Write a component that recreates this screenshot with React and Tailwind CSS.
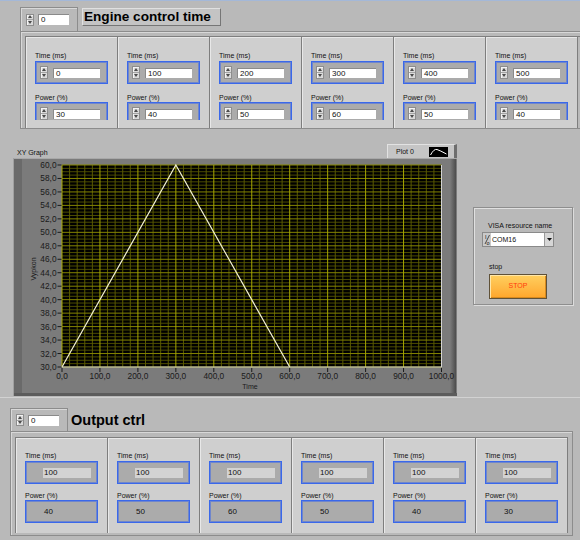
import React from 'react';

const engine = [
  { time: 0, power: 30 },
  { time: 100, power: 40 },
  { time: 200, power: 50 },
  { time: 300, power: 60 },
  { time: 400, power: 50 },
  { time: 500, power: 40 },
];

const output = [
  { time: 100, power: 40 },
  { time: 100, power: 50 },
  { time: 100, power: 60 },
  { time: 100, power: 50 },
  { time: 100, power: 40 },
  { time: 100, power: 30 },
];

const Spinner = ({ small }) => (
  <div className={`flex flex-col w-[8px] ${small ? 'h-[12px]' : 'h-[13px]'} border border-[#8d8d8d] bg-[#dadada] shadow-[inset_1px_1px_0_#f4f4f4]`}>
    <div className="flex-1 flex items-center justify-center border-b border-[#a4a4a4]">
      <svg width="4" height="3" viewBox="0 0 4 3"><path d="M2 0L4 3H0Z" fill="#4a4a4a" /></svg>
    </div>
    <div className="flex-1 flex items-center justify-center">
      <svg width="4" height="3" viewBox="0 0 4 3"><path d="M0 0H4L2 3Z" fill="#4a4a4a" /></svg>
    </div>
  </div>
);

const Label = ({ children, className = '' }) => (
  <div className={`h-[9px] text-[7px] leading-[9px] text-[#111] whitespace-nowrap ${className}`}>{children}</div>
);

const blueBox = "w-[73px] h-[23px] border border-[#3a68ea] bg-[#ababab] shadow-[inset_0_0_0_1px_#6f86cc]";

const EngineElement = ({ time, power }) => (
  <div className="w-[92px] h-[91px] border-r border-[#7e7e7e] bg-[#cfcfcf] shadow-[inset_1px_1px_0_#e8e8e8]">
    <div className="h-[83px] overflow-hidden pl-[9px] pt-[14px]">
      <Label>Time (ms)</Label>
      <div className={`mt-[1px] flex items-center pl-[4px] gap-[5px] ${blueBox}`}>
        <Spinner />
        <div className="w-[47px] h-[10px] bg-white border-t border-l border-[#8a8a8a] text-[8px] leading-[9px] pl-[2px] text-[#111]">{time}</div>
      </div>
      <Label className="mt-[9px]">Power (%)</Label>
      <div className={`flex items-center pl-[4px] gap-[5px] ${blueBox}`}>
        <Spinner />
        <div className="w-[47px] h-[10px] bg-white border-t border-l border-[#8a8a8a] text-[8px] leading-[9px] pl-[2px] text-[#111]">{power}</div>
      </div>
    </div>
  </div>
);

const OutputElement = ({ time, power }) => (
  <div className="w-[92px] h-[95px] border-r border-[#7e7e7e] bg-[#cfcfcf] shadow-[inset_1px_1px_0_#e8e8e8] pl-[9px] pt-[13px]">
    <Label>Time (ms)</Label>
    <div className={`mt-[1px] flex items-center pl-[17px] ${blueBox}`}>
      <div className="w-[48px] h-[10px] bg-[#d3d3d3] text-[8px] leading-[10px] pl-[1px] text-[#111]">{time}</div>
    </div>
    <Label className="mt-[7px]">Power (%)</Label>
    <div className={`flex items-center pl-[18px] text-[8px] text-[#111] ${blueBox}`}>{power}</div>
  </div>
);

const XYGraph = () => {
  const x0 = 49, y0 = 7, w = 379.5, h = 202;
  const sx = (v) => x0 + (v / 1000) * w;
  const sy = (v) => y0 + ((60 - v) / 30) * h;
  const vMinor = [], vMajor = [], hMinor = [], hMajor = [];
  for (let v = 0; v <= 1000; v += 20) (v % 100 === 0 ? vMajor : vMinor).push(v);
  for (let i = 0; i <= 60; i++) (i % 4 === 0 ? hMajor : hMinor).push(30 + i * 0.5);
  const yLabels = [];
  for (let v = 30; v <= 60; v += 2) yLabels.push(v);

  return (
    <svg width="444" height="238" viewBox="0 0 444 238" className="block">
      <defs>
        <linearGradient id="rgrad" x1="0" x2="1" y1="0" y2="0">
          <stop offset="0" stopColor="#7b7b7b" />
          <stop offset="1" stopColor="#4c4c4c" />
        </linearGradient>
      </defs>
      <rect x="0" y="0" width="444" height="238" fill="#7b7b7b" />
      <rect x="1" y="1" width="8" height="236" fill="#6a6a6a" />
      <rect x="437" y="1" width="6" height="236" fill="url(#rgrad)" />
      <rect x="0" y="235" width="444" height="3" fill="#5c5c5c" />
      <line x1="0" y1="0.5" x2="444" y2="0.5" stroke="#a8a8a8" />
      <line x1="0.5" y1="0" x2="0.5" y2="238" stroke="#a0a0a0" />

      <rect x={x0} y={y0} width={w} height={h} fill="#000" />
      {hMinor.map((v) => (
        <line key={'hm' + v} x1={x0} x2={x0 + w} y1={sy(v)} y2={sy(v)} stroke="#4b4b00" strokeWidth="1" />
      ))}
      {vMinor.map((v) => (
        <line key={'vm' + v} x1={sx(v)} x2={sx(v)} y1={y0} y2={y0 + h} stroke="#5a5a00" strokeWidth="1" />
      ))}
      {hMajor.map((v) => (
        <line key={'hM' + v} x1={x0} x2={x0 + w} y1={sy(v)} y2={sy(v)} stroke="#858500" strokeWidth="1" />
      ))}
      {vMajor.map((v) => (
        <line key={'vM' + v} x1={sx(v)} x2={sx(v)} y1={y0} y2={y0 + h} stroke="#a6a600" strokeWidth="1" />
      ))}
      <polyline
        points={`${sx(0)},${sy(30)} ${sx(300)},${sy(60)} ${sx(600)},${sy(30)}`}
        fill="none"
        stroke="#f2f0d4"
        strokeWidth="1.2"
      />
      <line x1={x0 + w} y1={y0} x2={x0 + w} y2={y0 + h} stroke="#d4d4d4" />
      <line x1={x0} y1={y0 + h} x2={x0 + w} y2={y0 + h} stroke="#d4d4d4" />

      <g fontFamily="'Liberation Sans', Arial, sans-serif" fontSize="8.3" fill="#1a1a1a">
        {yLabels.map((v) => (
          <g key={'yl' + v}>
            <text x="43.5" y={sy(v) + 3} textAnchor="end">{v},0</text>
            <line x1="44.5" x2="48.5" y1={sy(v)} y2={sy(v)} stroke="#1a1a1a" />
          </g>
        ))}
        {vMajor.map((v) => (
          <g key={'xl' + v}>
            <line x1={sx(v)} x2={sx(v)} y1={y0 + h + 1} y2={y0 + h + 5} stroke="#1a1a1a" />
            <text x={sx(v)} y="221" textAnchor="middle">{v},0</text>
          </g>
        ))}
      </g>
      <text x="237" y="231" textAnchor="middle" fontFamily="'Liberation Sans', Arial, sans-serif" fontSize="7" fill="#1a1a1a">Time</text>
      <text
        x="0"
        y="0"
        transform="translate(21.5 111) rotate(-90)"
        textAnchor="middle"
        dominantBaseline="middle"
        fontFamily="'Liberation Sans', Arial, sans-serif"
        fontSize="7"
        fill="#1a1a1a"
      >
        Vypkon
      </text>
    </svg>
  );
};

const Legend = () => (
  <div className="w-[70px] h-[14px] bg-[#c5c5c5] border-t border-l border-[#e2e2e2] border-r-[3px] border-r-[#6e6e6e] flex items-center">
    <span className="ml-[8px] text-[7px] leading-[9px] text-[#111]">Plot 0</span>
    <div className="ml-auto mr-[6px] w-[19px] h-[10px] bg-black flex items-center justify-center">
      <svg width="17" height="8" viewBox="0 0 17 8">
        <path d="M0.5 7 Q4 0.5 7 1.5 T16.5 6" fill="none" stroke="#fff" strokeWidth="1" />
      </svg>
    </div>
  </div>
);

const IoIcon = () => (
  <svg width="7" height="13" viewBox="0 0 7 13" className="shrink-0">
    <text x="1" y="5.5" fontSize="5.5" fontFamily="'Liberation Sans', Arial, sans-serif" fill="#111">I</text>
    <line x1="5.5" y1="2" x2="1" y2="11" stroke="#111" strokeWidth="0.7" />
    <text x="2.6" y="12" fontSize="5.5" fontFamily="'Liberation Sans', Arial, sans-serif" fill="#111">o</text>
  </svg>
);

export default function App() {
  return (
    <div className="w-[580px] h-[540px] overflow-hidden bg-[#b9b9b9] border-t border-[#a4b8d8] font-['Liberation_Sans',Arial,sans-serif] text-[#111]">
      {/* Engine control time array */}
      <div className="pl-[20px] pt-[6px]">
        <div className="flex items-start">
          <div className="w-[58px] h-[24px] border border-b-0 border-[#8c8c8c] shadow-[inset_1px_1px_0_#d8d8d8] flex items-center pl-[5px] gap-[4px]">
            <Spinner small />
            <div className="w-[31px] h-[11px] bg-white border-t border-l border-[#8a8a8a] text-[8px] leading-[10px] pl-[2px]">0</div>
          </div>
          <div className="ml-[4px] mt-[1px] w-[139px] h-[18px] bg-[#c4c4c4] border border-[#e0e0e0] border-r-[#767676] border-b-[#767676] pl-[1px] text-[13.6px] font-bold leading-[16px] text-black whitespace-nowrap">
            Engine control time
          </div>
        </div>
        <div className="w-[565px] h-[98px] border border-[#8c8c8c] shadow-[inset_1px_1px_0_#d8d8d8] pl-[4px] pt-[4px]">
          <div className="flex border-l border-t border-[#7e7e7e]">
            {engine.map((e, i) => (
              <EngineElement key={i} time={e.time} power={e.power} />
            ))}
          </div>
        </div>
      </div>

      {/* Graph + VISA */}
      <div className="flex mt-[15px]">
        <div className="ml-[13px] w-[444px]">
          <div className="h-[14px] flex items-end justify-between">
            <span className="ml-[4px] mb-[1px] text-[7px] leading-[9px]">XY Graph</span>
            <Legend />
          </div>
          <XYGraph />
        </div>
        <div className="ml-[16px] mt-[63px] w-[100px] h-[98px] border border-[#8e8e8e] shadow-[inset_1px_1px_0_#e0e0e0,1px_1px_0_#dcdcdc]">
          <Label className="pl-[14px] mt-[13px]">VISA resource name</Label>
          <div className="ml-[8px] mt-[2px] w-[72px] h-[15px] border border-[#8a8a8a] bg-[#c9c9c9] flex items-center pl-[1px]">
            <IoIcon />
            <div className="w-[53px] h-[13px] bg-white text-[7px] leading-[13px] pl-[1px]">COM16</div>
            <div className="w-[9px] h-[13px] bg-[#d6d6d6] border-l border-[#9a9a9a] flex items-center justify-center">
              <svg width="5" height="3" viewBox="0 0 5 3"><path d="M0 0H5L2.5 3Z" fill="#111" /></svg>
            </div>
          </div>
          <Label className="pl-[15px] mt-[15px]">stop</Label>
          <div className="ml-[15px] mt-[3px] w-[58px] h-[25px] border border-[#5f5138] bg-gradient-to-b from-[#ffcf5e] to-[#ffa62a] shadow-[inset_1px_1px_0_#ffe6a8,inset_-1px_-1px_0_#d88a1e] flex items-center justify-center text-[7px] text-[#ff3c0c]">
            STOP
          </div>
        </div>
      </div>

      <div className="mt-[1px] h-[1px] bg-[#d2d2d2]" />

      {/* Output ctrl array */}
      <div className="pl-[10px] mt-[10px]">
        <div className="flex items-start">
          <div className="w-[58px] h-[23px] border border-b-0 border-[#8c8c8c] shadow-[inset_1px_1px_0_#d8d8d8] flex items-center pl-[5px] gap-[4px]">
            <Spinner small />
            <div className="w-[31px] h-[11px] bg-white border-t border-l border-[#8a8a8a] text-[8px] leading-[10px] pl-[2px]">0</div>
          </div>
          <div className="ml-[3px] mt-[4px] text-[14.5px] font-bold leading-[17px] text-black whitespace-nowrap">Output ctrl</div>
        </div>
        <div className="w-[563px] h-[105px] border border-[#8c8c8c] shadow-[inset_1px_1px_0_#d8d8d8] pl-[4px] pt-[5px]">
          <div className="flex border-l border-t border-[#7e7e7e] w-[553px]">
            {output.map((e, i) => (
              <OutputElement key={i} time={e.time} power={e.power} />
            ))}
          </div>
        </div>
      </div>
    </div>
  );
}
